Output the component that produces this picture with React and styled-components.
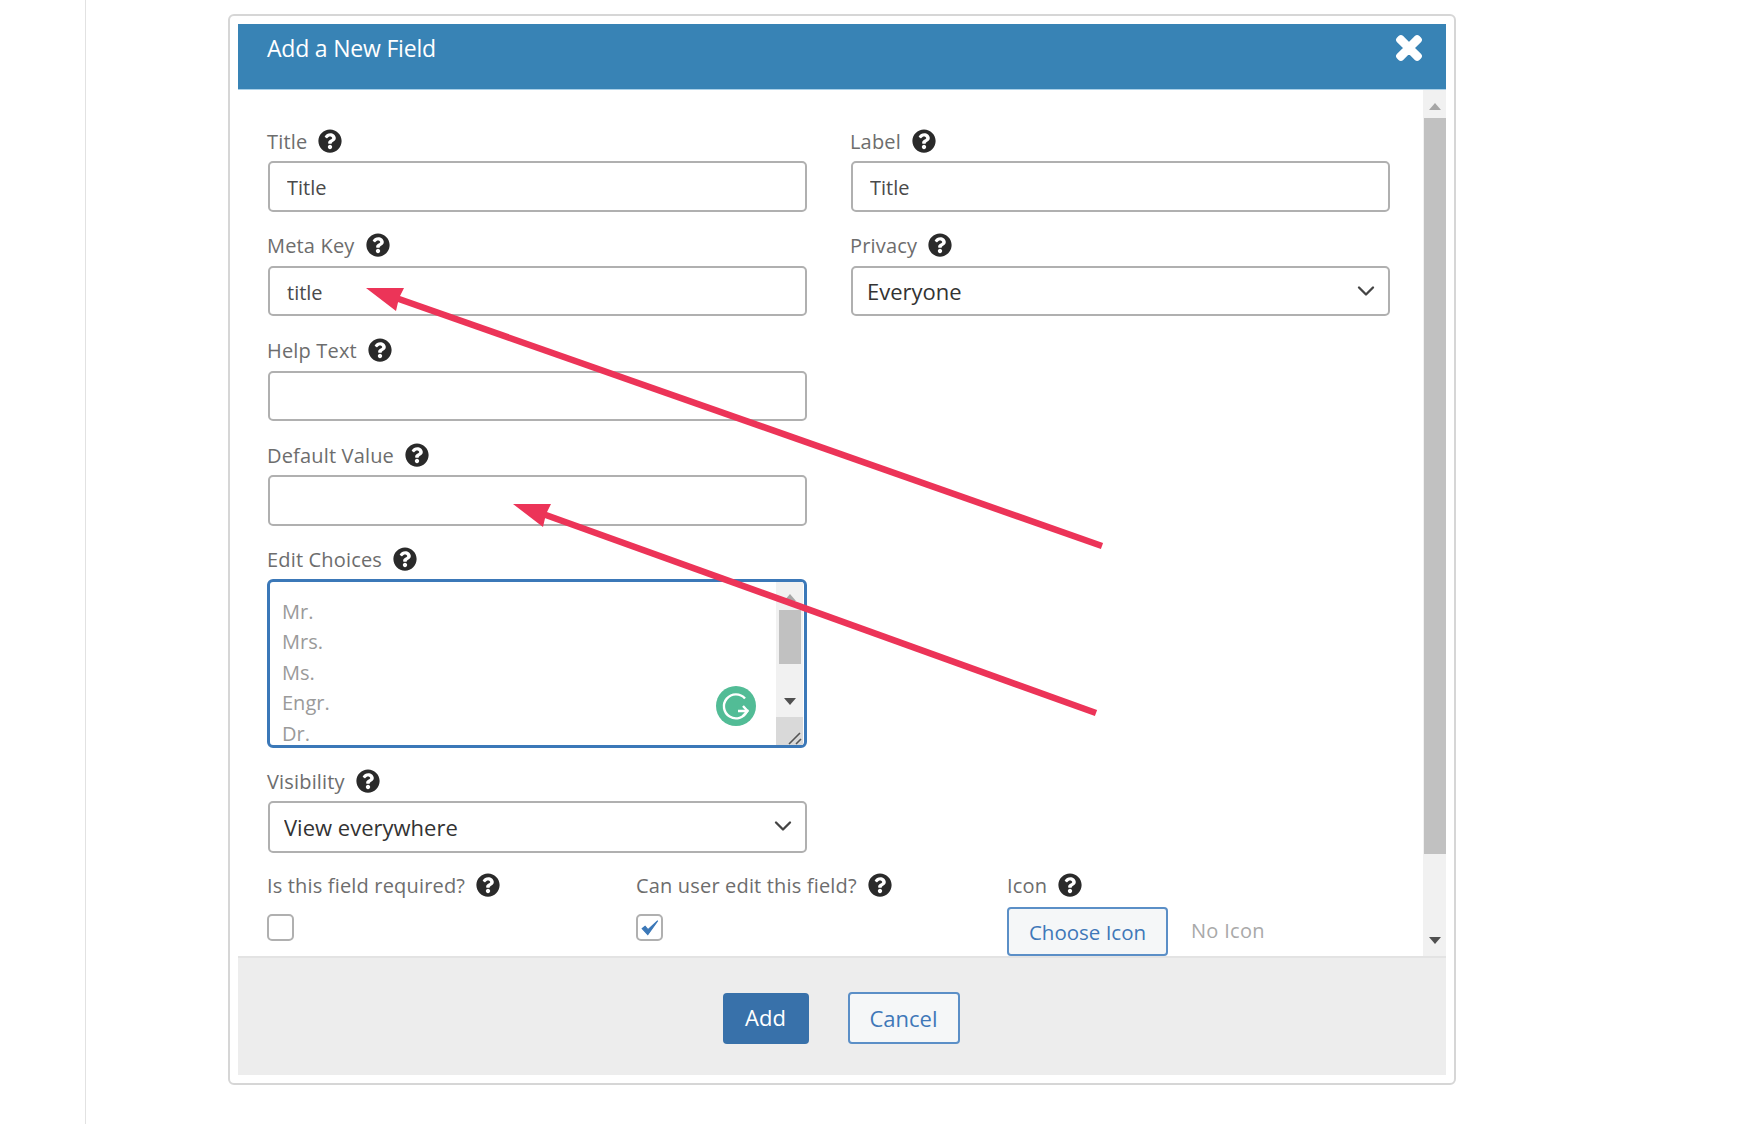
import React from 'react';
import styled, { createGlobalStyle } from 'styled-components';
import { FaQuestionCircle, FaTimes } from 'react-icons/fa';
import { ChevronDown } from 'lucide-react';

const GlobalStyle = createGlobalStyle`
  html, body {
    margin: 0;
    padding: 0;
    background: #fff;
    overflow: hidden;
  }
  * {
    box-sizing: border-box;
  }
`;

const FONT = '"Open Sans", "Noto Sans", sans-serif';

const Page = styled.div`
  position: relative;
  display: flex;
  width: 1740px;
  height: 1124px;
  font-family: ${FONT};
`;

const Rail = styled.div`
  width: 86px;
  height: 100%;
  border-right: 1px solid #e2e2e2;
`;

const Modal = styled.div`
  display: flex;
  flex-direction: column;
  width: 1228px;
  height: 1071px;
  margin: 14px 0 0 142px;
  padding: 8px;
  border: 2px solid #d6d6d6;
  border-radius: 6px;
  background: #fff;
`;

const Header = styled.div`
  display: flex;
  justify-content: space-between;
  flex: none;
  height: 66px;
  padding: 6px 21px 0 29px;
  background: #3883b5;
  border-bottom: 1px solid #a9d0e8;
  color: #fff;
`;

const HeaderTitle = styled.h2`
  margin: 0;
  font-size: 23px;
  line-height: 36px;
  font-weight: 400;
  letter-spacing: -0.2px;
`;

const CloseIcon = styled(FaTimes)`
  width: 32px;
  height: 34px;
  margin-top: 1px;
  color: #fff;
  stroke: #fff;
  stroke-width: 36;
`;

const Body = styled.div`
  display: flex;
  flex: 1;
  min-height: 0;
`;

const Form = styled.div`
  flex: 1;
  padding: 38px 0 0 29px;
  overflow: hidden;
`;

const Columns = styled.div`
  display: grid;
  grid-template-columns: 540px 540px;
  column-gap: 43px;
`;

const Field = styled.div`
  width: 540px;
  margin-bottom: ${p => p.$after}px;
`;

const LabelRow = styled.div`
  display: flex;
  align-items: center;
  gap: 11px;
  height: 26px;
  margin-bottom: ${p => p.$gap}px;
  color: #6d6d6d;
  font-size: 20px;
  letter-spacing: 0.17px;
`;

const HelpIcon = styled(FaQuestionCircle)`
  flex: none;
  width: 24px;
  height: 24px;
  color: #2a2a2a;
`;

const TextInput = styled.input`
  display: block;
  width: calc(100% - 1px);
  height: ${p => p.$h}px;
  margin-left: 1px;
  padding: 2px 17px 0;
  border: 2px solid #b0b0b0;
  border-radius: 5px;
  background: #fff;
  color: #4a4a4a;
  font-family: ${FONT};
  font-size: 20px;
  outline: none;
`;

const SelectBox = styled.div`
  position: relative;
  width: calc(100% - 1px);
  height: ${p => p.$h}px;
  margin-left: 1px;
`;

const Select = styled.select`
  width: 100%;
  height: 100%;
  padding: 0 44px 0 14px;
  border: 2px solid #b0b0b0;
  border-radius: 5px;
  background: #fff;
  color: #333;
  font-family: ${FONT};
  font-size: 22px;
  appearance: none;
  outline: none;
`;

const SelectChevron = styled(ChevronDown)`
  position: absolute;
  top: 11px;
  right: 10px;
  width: 28px;
  height: 28px;
  color: #444;
  pointer-events: none;
`;

const ChoicesBox = styled.div`
  position: relative;
  display: flex;
  height: 169px;
  border: 3px solid #3b78b8;
  border-radius: 6px;
  overflow: hidden;
`;

const ChoicesText = styled.div`
  flex: 1;
  padding: 15px 0 0 12px;
  color: #9a9a9a;
  font-size: 20px;
  line-height: 30.4px;
`;

const ChoicesBar = styled.div`
  display: flex;
  flex-direction: column;
  align-items: center;
  flex: none;
  width: 27px;
  margin-right: 1px;
  background: #f1f1f1;
`;

const ChoicesThumb = styled.div`
  width: 22px;
  height: 54px;
  margin-top: 9px;
  background: #c1c1c1;
`;

const Resizer = styled.div`
  display: flex;
  align-items: flex-end;
  justify-content: flex-end;
  width: 27px;
  height: 28px;
  margin-top: 12px;
  background: #d9d9d9;
`;

const Arrow = styled.span`
  display: block;
  flex: none;
  width: 0;
  height: 0;
  margin-top: ${p => p.$top}px;
  border-left: 6px solid transparent;
  border-right: 6px solid transparent;
  border-${p => (p.$up ? 'bottom' : 'top')}: 7px solid ${p => p.$color};
`;

const GrammarlyBadge = styled.svg`
  position: absolute;
  top: 104px;
  right: 48px;
  width: 40px;
  height: 40px;
`;

const BottomRow = styled.div`
  display: grid;
  grid-template-columns: 369px 371px 1fr;
`;

const CheckColumn = styled.div`
  display: flex;
  flex-direction: column;
`;

const CheckBox = styled.div`
  display: flex;
  align-items: center;
  justify-content: center;
  width: 27px;
  height: 27px;
  margin-top: 16px;
  border: 2px solid #b0b0b0;
  border-radius: 5px;
  background: #fff;
`;

const IconRow = styled.div`
  display: flex;
  align-items: flex-start;
  gap: 23px;
`;

const GhostButton = styled.button`
  flex: none;
  width: ${p => p.$w}px;
  height: ${p => p.$h}px;
  padding: 0;
  border: 2px solid #5b8fc7;
  border-radius: 4px;
  background: #f5f7f8;
  color: #3f78b8;
  font-family: ${FONT};
  font-size: ${p => p.$size}px;
`;

const NoIcon = styled.span`
  padding-top: 10px;
  color: #a9a9a9;
  font-size: 20px;
  letter-spacing: 0.3px;
`;

const MainBar = styled.div`
  display: flex;
  flex-direction: column;
  align-items: flex-end;
  flex: none;
  width: 23px;
  background: #f1f1f1;
`;

const MainThumb = styled.div`
  width: 22px;
  height: 736px;
  margin-top: 8px;
  background: #c1c1c1;
`;

const BarArrow = styled(Arrow)`
  margin-right: 5px;
`;

const Footer = styled.div`
  display: flex;
  align-items: center;
  justify-content: center;
  flex: none;
  gap: 39px;
  height: 119px;
  padding: 3px 2px 0 0;
  background: #ededed;
  border-top: 2px solid #e3e3e3;
`;

const AddButton = styled.button`
  width: 86px;
  height: 51px;
  padding: 0 0 2px;
  border: none;
  border-radius: 4px;
  background: #3871aa;
  color: #fff;
  font-family: ${FONT};
  font-size: 22px;
`;

const Overlay = styled.svg`
  position: absolute;
  top: 0;
  left: 0;
  pointer-events: none;
`;

const Label = ({ text, gap }) => (
  <LabelRow $gap={gap}>
    {text}
    <HelpIcon />
  </LabelRow>
);

// tip is the point of the head, head shape is the same for both arrows
const RedArrow = ({ tipX, tipY, tailX, tailY }) => (
  <g fill="#ec3458" stroke="#ec3458">
    <line x1={tailX} y1={tailY} x2={tipX + 30} y2={tipY + 10} strokeWidth="6.5" />
    <polygon
      stroke="none"
      points={`${tipX},${tipY} ${tipX + 38},${tipY} ${tipX + 33},${tipY + 10} ${tipX + 30},${tipY + 23}`}
    />
  </g>
);

function App() {
  return (
    <Page>
      <GlobalStyle />
      <Rail />
      <Modal>
        <Header>
          <HeaderTitle>Add a New Field</HeaderTitle>
          <CloseIcon />
        </Header>
        <Body>
          <Form>
            <Columns>
              <Field $after={20}>
                <Label text="Title" gap={7} />
                <TextInput $h={51} defaultValue="Title" readOnly />
              </Field>
              <Field $after={20}>
                <Label text="Label" gap={7} />
                <TextInput $h={51} defaultValue="Title" readOnly />
              </Field>
              <Field $after={21}>
                <Label text="Meta Key" gap={8} />
                <TextInput $h={50} defaultValue="title" readOnly />
              </Field>
              <Field $after={21}>
                <Label text="Privacy" gap={8} />
                <SelectBox $h={50}>
                  <Select defaultValue="Everyone">
                    <option>Everyone</option>
                  </Select>
                  <SelectChevron />
                </SelectBox>
              </Field>
            </Columns>
            <Field $after={21}>
              <Label text="Help Text" gap={8} />
              <TextInput $h={50} readOnly />
            </Field>
            <Field $after={20}>
              <Label text="Default Value" gap={7} />
              <TextInput $h={51} readOnly />
            </Field>
            <Field $after={20}>
              <Label text="Edit Choices" gap={7} />
              <ChoicesBox>
                <ChoicesText>
                  Mr.<br />Mrs.<br />Ms.<br />Engr.<br />Dr.
                </ChoicesText>
                <ChoicesBar>
                  <Arrow $up $top={12} $color="#a6a6a6" />
                  <ChoicesThumb />
                  <Arrow $top={34} $color="#505050" />
                  <Resizer>
                    <svg width="16" height="16" viewBox="0 0 16 16">
                      <path d="M2 15 L13 4 M9 15 L14 10" stroke="#555" strokeWidth="1.6" fill="none" />
                    </svg>
                  </Resizer>
                </ChoicesBar>
                <GrammarlyBadge viewBox="0 0 40 40">
                  <circle cx="20" cy="20" r="20" fill="#52bc96" />
                  <path d="M29 12.5 A12 12 0 1 0 31 25 L22 25" fill="none" stroke="#fff" strokeWidth="2.4" />
                  <path d="M27 20 L31.5 25 L27 30" fill="none" stroke="#fff" strokeWidth="2.4" />
                </GrammarlyBadge>
              </ChoicesBox>
            </Field>
            <Field $after={19}>
              <Label text="Visibility" gap={7} />
              <SelectBox $h={52}>
                <Select defaultValue="View everywhere">
                  <option>View everywhere</option>
                </Select>
                <SelectChevron />
              </SelectBox>
            </Field>
            <BottomRow>
              <CheckColumn>
                <Label text="Is this field required?" gap={0} />
                <CheckBox />
              </CheckColumn>
              <CheckColumn>
                <Label text="Can user edit this field?" gap={0} />
                <CheckBox>
                  <svg width="20" height="20" viewBox="0 0 18 18">
                    <path d="M2 9.5 L7 15 L16 2.5 L7.2 10.5 L4.6 7.5 Z" fill="#3b78b8" stroke="#3b78b8" strokeWidth="1" />
                  </svg>
                </CheckBox>
              </CheckColumn>
              <CheckColumn>
                <Label text="Icon" gap={9} />
                <IconRow>
                  <GhostButton $w={161} $h={49} $size={20.5}>Choose Icon</GhostButton>
                  <NoIcon>No Icon</NoIcon>
                </IconRow>
              </CheckColumn>
            </BottomRow>
          </Form>
          <MainBar>
            <BarArrow $up $top={13} $color="#a6a6a6" />
            <MainThumb />
            <BarArrow $top={83} $color="#505050" />
          </MainBar>
        </Body>
        <Footer>
          <AddButton>Add</AddButton>
          <GhostButton $w={112} $h={52} $size={22}>Cancel</GhostButton>
        </Footer>
      </Modal>
      <Overlay width="1740" height="1124" viewBox="0 0 1740 1124">
        <RedArrow tipX={366} tipY={288} tailX={1102} tailY={546} />
        <RedArrow tipX={513} tipY={504} tailX={1096} tailY={713} />
      </Overlay>
    </Page>
  );
}

export default App;
